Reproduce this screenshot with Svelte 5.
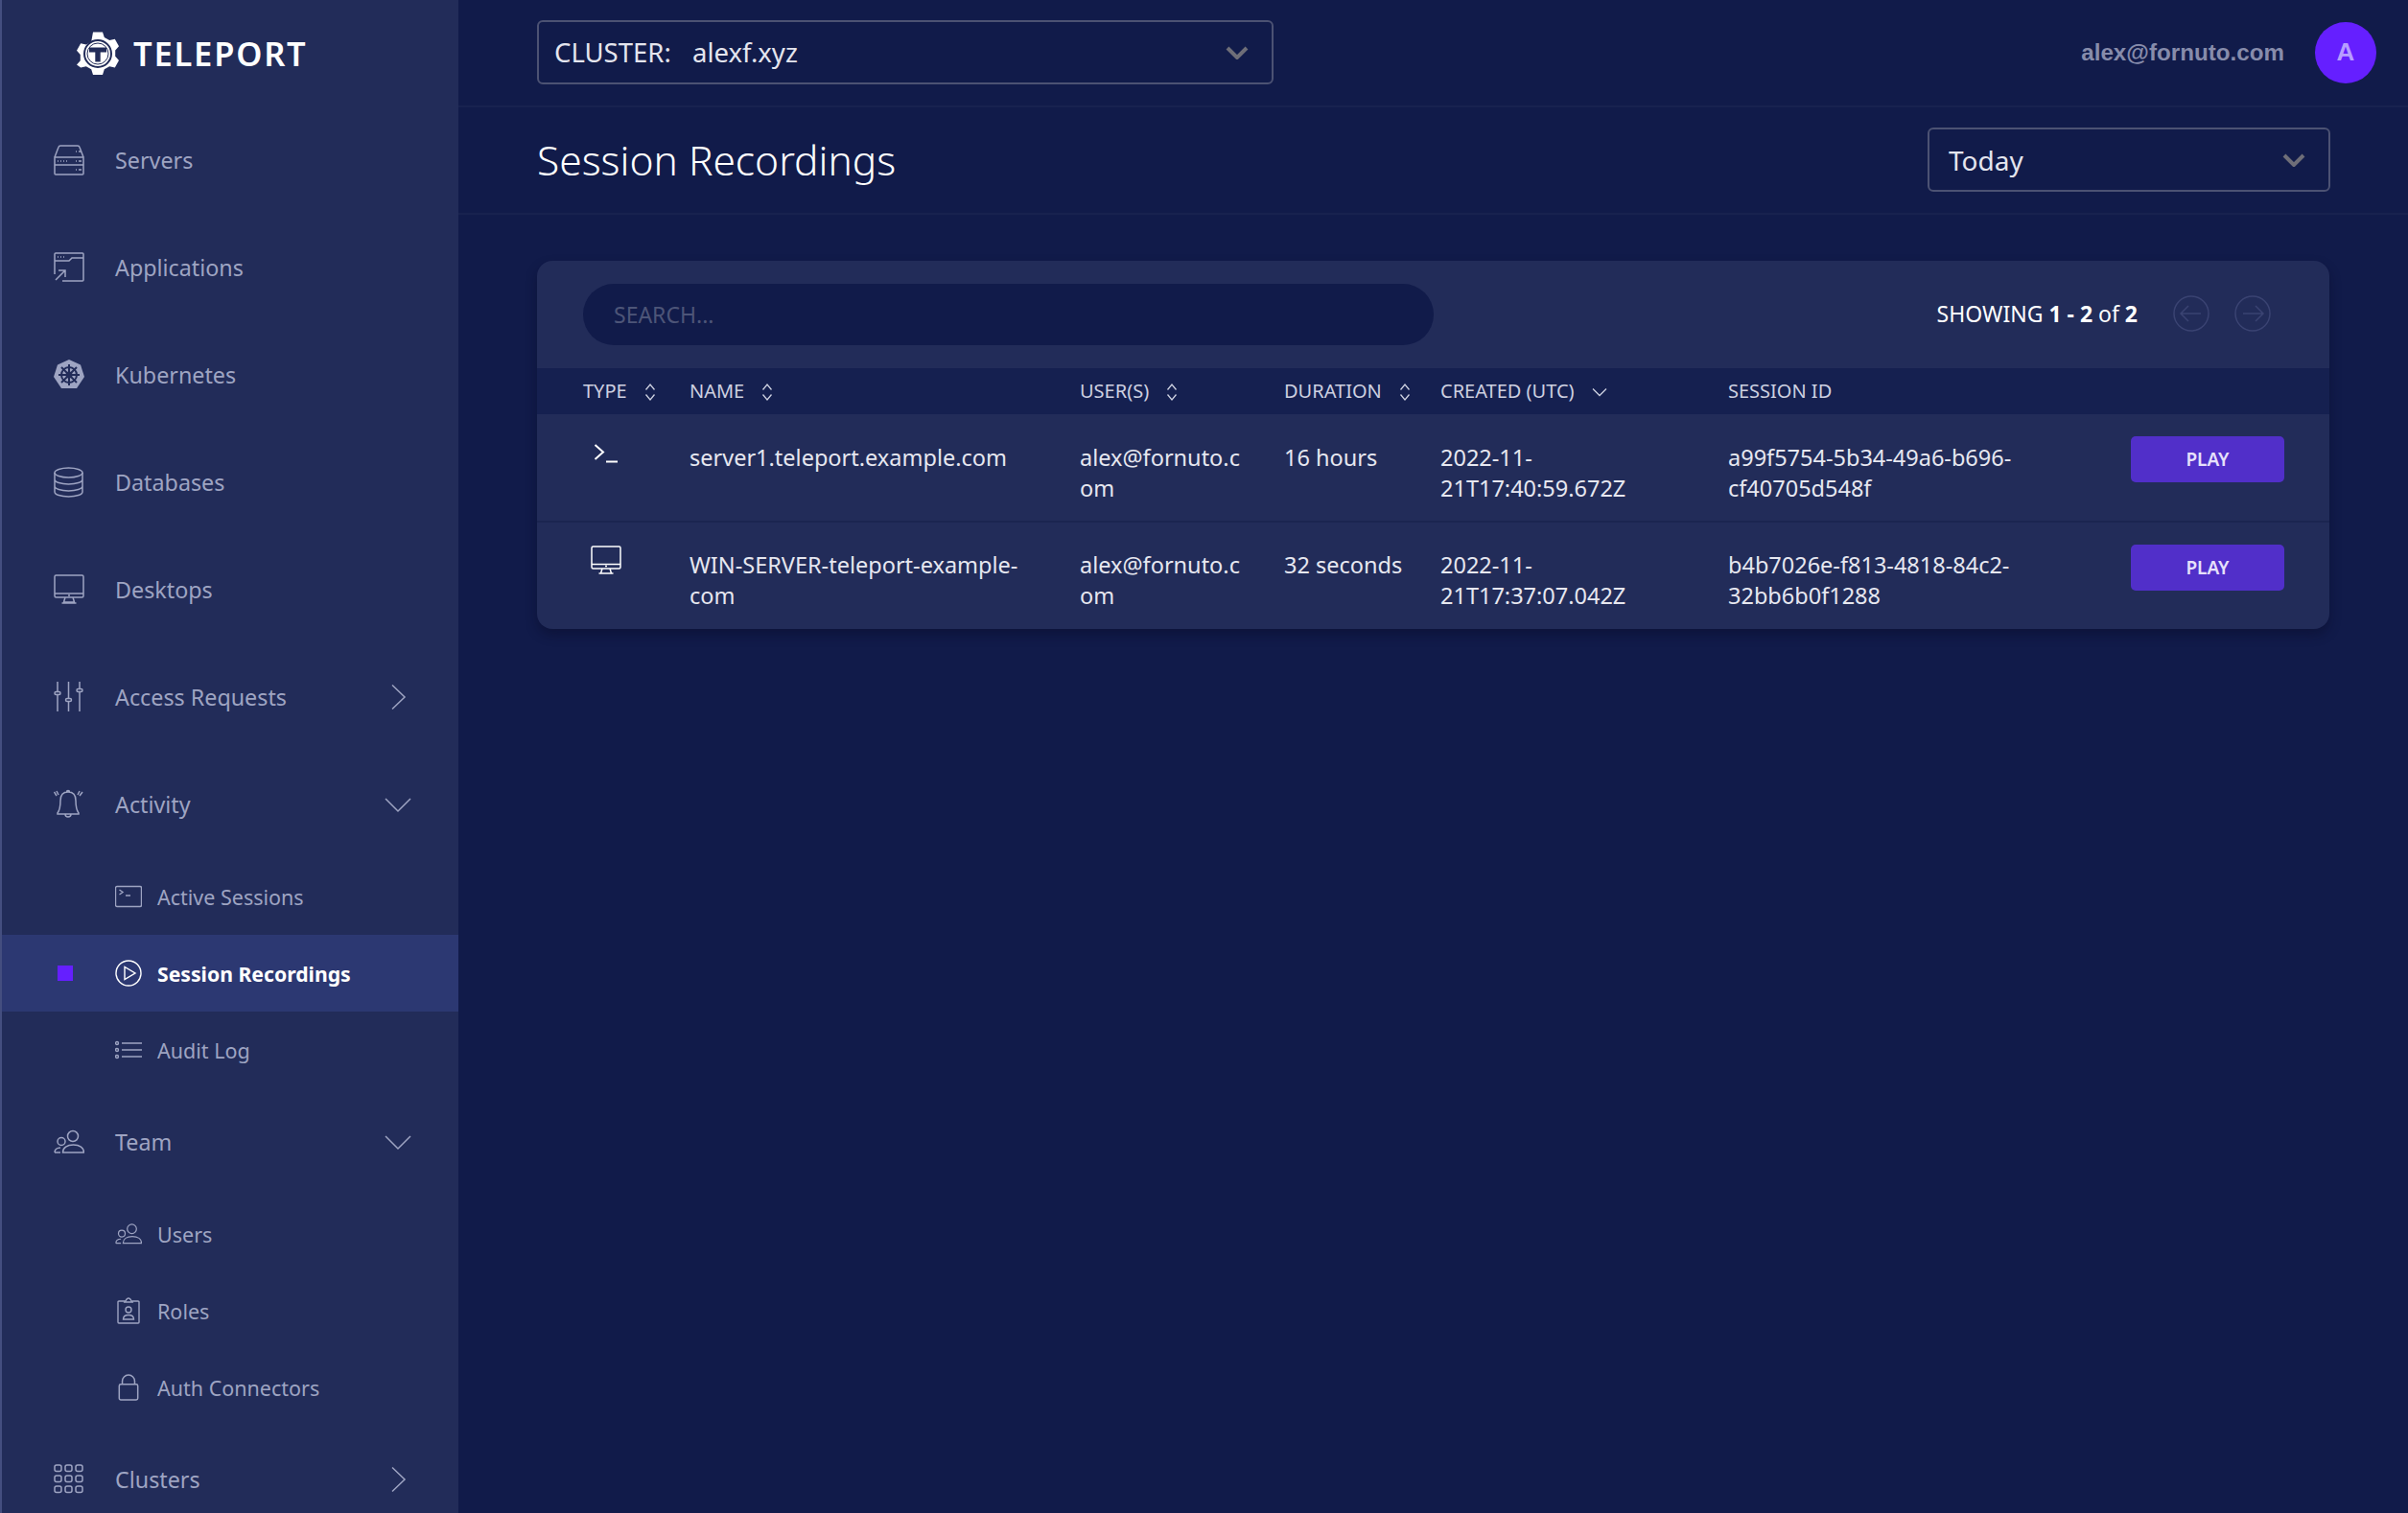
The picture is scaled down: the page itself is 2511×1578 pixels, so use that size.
<script>
  const recordings = [
    { kind: "ssh", name: "server1.teleport.example.com", user: "alex@fornuto.com", duration: "16 hours", created: "2022-11-21T17:40:59.672Z", sid: "a99f5754-5b34-49a6-b696-cf40705d548f" },
    { kind: "desktop", name: "WIN-SERVER-teleport-example-com", user: "alex@fornuto.com", duration: "32 seconds", created: "2022-11-21T17:37:07.042Z", sid: "b4b7026e-f813-4818-84c2-32bb6b0f1288" }
  ]
</script>

{#snippet sortIcon()}
  <svg class="sort" viewBox="0 0 12 20"><path d="M1.500 7.500 6 2l4.500 5.500M1.500 12.500 6 18l4.500-5.500" /></svg>
{/snippet}

{#snippet chevRight()}
  <svg class="chev" viewBox="0 0 28 28"><path d="M8 1.500 21 14 8 26.500" /></svg>
{/snippet}

{#snippet chevDown()}
  <svg class="chev" viewBox="0 0 28 28"><path d="M1 8l13 13L27 8" /></svg>
{/snippet}

{#snippet users()}
  <circle cx="20" cy="6" r="5.500" /><path d="M9.500 23c0-5 4.500-8 11-8s11 3 11 8zM1 23c0-3 2.500-5 6-5M1 23h6" /><circle cx="8" cy="11.500" r="4" />
{/snippet}

<div class="page">
  <aside class="side">
    <div class="brand">
      <svg class="brand-icon" viewBox="0 0 44 48">
        <path fill="#fff" d="M17 1.500h10l1.800 5.500 5.400 3 5.600-1.200 4.200 7.500-3.800 4.200v6.300l3.800 4.200-4.200 7.500-5.600-1.200-5.400 3-1.800 5.700H17l-1.800-5.700-5.400-3-5.600 1.200L0 35.500 3.800 31.300V25L0 20.800l4.200-7.500L9.800 14.500l5.400-3z" />
        <circle cx="22" cy="24" r="14" fill="#fff" stroke="#222c59" stroke-width="2" />
        <circle cx="22" cy="24" r="11" fill="none" stroke="#222c59" stroke-width="1" />
        <path fill="#222c59" d="M13 17.500h18v5h-6.300v10h-5.400v-10H13z" />
      </svg>
      <span>TELEPORT</span>
    </div>

    <nav>
      <div class="item">
        <svg class="ico" viewBox="0 0 32 32"><path d="M1 13 5 2.500Q5.500 1 7 1h18q1.500 0 2 1.500L31 13M1 13h30v8H1zM1 21h30v9q0 1-1 1H2q-1 0-1-1zM23 7h1M26 7h3M23 17h1M26 17h3M23 26h1M26 26h3M4 17h1M7 17h1M10 17h1M13 17h1" /></svg>
        <span>Servers</span>
      </div>
      <div class="item">
        <svg class="ico" viewBox="0 0 32 32"><path d="M1 2q0-1 1-1h28q1 0 1 1v27q0 1-1 1H9M1 23V2M1 9h15l3-3 12 0M4 5h1M7 5h1M10 5h1M2 29l10-10M5 19h7v7" /></svg>
        <span>Applications</span>
      </div>
      <div class="item">
        <svg class="ico" viewBox="0 0 32 32">
          <path class="solid" d="M16 0 28 5.500 32 18 24 30H8L0 18 4 5.500z" />
          <g class="cut"><circle cx="16" cy="16" r="8" /><circle cx="16" cy="16" r="2.500" /><path d="M16 5v22M5 16h22M8 8l16 16M24 8 8 24" /></g>
        </svg>
        <span>Kubernetes</span>
      </div>
      <div class="item">
        <svg class="ico" viewBox="0 0 32 32"><ellipse cx="15.500" cy="6" rx="14.500" ry="5" /><path d="M1 6v20c0 2.800 6.500 5 14.500 5S30 28.800 30 26V6M1 13c0 2.800 6.500 5 14.500 5S30 15.800 30 13M1 20c0 2.800 6.500 5 14.500 5S30 22.800 30 20" /></svg>
        <span>Databases</span>
      </div>
      <div class="item">
        <svg class="ico" viewBox="0 0 32 32"><path d="M2.500 1h27q1.500 0 1.500 1.500v20q0 1.500-1.500 1.500h-27Q1 24 1 22.500v-20Q1 1 2.500 1zM1 20h30M12 24l-1.500 5h11L20 24M8.500 30h15M15 22h2" /></svg>
        <span>Desktops</span>
      </div>
      <div class="item">
        <svg class="ico" viewBox="0 0 32 32"><path d="M4 0v10M4 14v17M15.500 0v17M15.500 21v10M27 0v7M27 11v20" /><rect x="1" y="10.500" width="6" height="3" rx="1.500" /><rect x="12.500" y="17.500" width="6" height="3" rx="1.500" /><rect x="24" y="7.500" width="6" height="3" rx="1.500" /></svg>
        <span>Access Requests</span>
        {@render chevRight()}
      </div>
      <div class="item">
        <svg class="ico" viewBox="0 0 32 32"><path d="M15 3q-8 0-8 9 0 9-3 13v1h22v-1q-3-4-3-13 0-9-8-9zM12 26a3 3 0 0 0 6 0M13.500 3a1.500 1.500 0 0 1 3 0M3 2l2 4M0.500 3 3 7M27 2l-2 4M30 3l-3 4" /></svg>
        <span>Activity</span>
        {@render chevDown()}
      </div>
      <div class="sub">
        <svg class="ico-sm" viewBox="0 0 28 22"><rect x="0.500" y="0.500" width="27" height="21" rx="1.500" /><path d="M4.500 4 8 6.500 4.500 9M11 10h5" /></svg>
        <span>Active Sessions</span>
      </div>
      <div class="sub active">
        <i class="mark"></i>
        <svg class="ico-sm" viewBox="0 0 28 28"><circle cx="14" cy="14" r="13" /><path d="M10 7.500v13l11-6.500z" /></svg>
        <span>Session Recordings</span>
      </div>
      <div class="sub">
        <svg class="ico-sm" viewBox="0 0 28 20"><circle cx="2" cy="3" r="1.500" /><circle cx="2" cy="10" r="1.500" /><circle cx="2" cy="17" r="1.500" /><path d="M7 3h21M7 10h21M7 17h21" /></svg>
        <span>Audit Log</span>
      </div>
      <div class="item">
        <svg class="ico" viewBox="0 0 32 24">{@render users()}</svg>
        <span>Team</span>
        {@render chevDown()}
      </div>
      <div class="sub">
        <svg class="ico-sm" viewBox="0 0 32 24">{@render users()}</svg>
        <span>Users</span>
      </div>
      <div class="sub">
        <svg class="ico-sm" viewBox="0 0 24 28"><path d="M8 4H2q-1 0-1 1v21q0 1 1 1h20q1 0 1-1V5q0-1-1-1h-6M8 5l2.500-3.500q1.500-1 3 0L16 5zM6.500 23c0-3 2.500-4.500 5.500-4.500s5.500 1.500 5.500 4.500z" /><circle cx="12" cy="13" r="3" /></svg>
        <span>Roles</span>
      </div>
      <div class="sub">
        <svg class="ico-sm" viewBox="0 0 20 26"><rect x="1" y="10" width="18" height="15" rx="1.500" /><path d="M4 10V7a6 6 0 0 1 12 0v3" /></svg>
        <span>Auth Connectors</span>
      </div>
      <div class="item">
        <svg class="ico" viewBox="0 0 32 32">
          {#each [1, 12, 23] as y}
            {#each [1, 12, 23] as x}
              <rect {x} {y} width="7" height="6.500" rx="2" />
            {/each}
          {/each}
        </svg>
        <span>Clusters</span>
        {@render chevRight()}
      </div>
    </nav>
  </aside>

  <main>
    <header class="topbar">
      <div class="select cluster">
        <span class="label">CLUSTER:</span>
        <span>alexf.xyz</span>
        <svg class="caret" viewBox="0 0 24 14"><path d="M2 2l10 10L22 2" /></svg>
      </div>
      <div class="account">
        <span class="email">alex@fornuto.com</span>
        <span class="avatar">A</span>
      </div>
    </header>

    <div class="subhead">
      <h1>Session Recordings</h1>
      <div class="select range">
        <span>Today</span>
        <svg class="caret" viewBox="0 0 24 14"><path d="M2 2l10 10L22 2" /></svg>
      </div>
    </div>

    <section class="card">
      <div class="tools">
        <div class="search">SEARCH...</div>
        <div class="pager">
          <span class="count">SHOWING <b>1 - 2</b> of <b>2</b></span>
          <svg class="arrow" viewBox="0 0 38 38"><circle cx="19" cy="19" r="18" /><path d="M29 19H8M16 11l-8 8 8 8" /></svg>
          <svg class="arrow" viewBox="0 0 38 38"><circle cx="19" cy="19" r="18" /><path d="M9 19h21M22 11l8 8-8 8" /></svg>
        </div>
      </div>

      <table>
        <colgroup>
          <col class="c-type" /><col class="c-name" /><col class="c-user" /><col class="c-dur" /><col class="c-created" /><col class="c-sid" /><col />
        </colgroup>
        <thead>
          <tr>
            <th>TYPE {@render sortIcon()}</th>
            <th>NAME {@render sortIcon()}</th>
            <th>USER(S) {@render sortIcon()}</th>
            <th>DURATION {@render sortIcon()}</th>
            <th>CREATED (UTC) <svg class="sort down" viewBox="0 0 16 10"><path d="M1 1.500l7 7 7-7" /></svg></th>
            <th>SESSION ID</th>
            <th></th>
          </tr>
        </thead>
        <tbody>
          {#each recordings as r}
            <tr>
              <td class="type">
                {#if r.kind === "ssh"}
                  <svg class="term" viewBox="0 0 26 20"><path d="M1.500 1 10 8.500 1.500 16M13 18.500h12" /></svg>
                {:else}
                  <svg class="mon" viewBox="0 0 32 30"><path d="M2.500 1h27q1.500 0 1.500 1.500v20q0 1.500-1.500 1.500h-27Q1 24 1 22.500v-20Q1 1 2.500 1zM1 19.500h30M12 24l-1.500 5h11L20 24M8.500 29h15M15 21.500h2" /></svg>
                {/if}
              </td>
              <td>{r.name}</td>
              <td class="brk">{r.user}</td>
              <td>{r.duration}</td>
              <td>{r.created}</td>
              <td>{r.sid}</td>
              <td class="act"><button>PLAY</button></td>
            </tr>
          {/each}
        </tbody>
      </table>
    </section>
  </main>
</div>

<style>
  :global(body) {
    margin: 0;
    background: #111b4a;
  }
  .page {
    display: flex;
    width: 2511px;
    height: 1578px;
    overflow: hidden;
    font-family: "Noto Sans", "Open Sans", sans-serif;
    color: #fff;
  }

  /* sidebar */
  .side {
    width: 478px;
    flex: none;
    box-sizing: border-box;
    background: #222c59;
    border-left: 2px solid #444e7f;
  }
  .brand {
    height: 111px;
    display: flex;
    align-items: center;
    padding-left: 78px;
    gap: 15px;
    font-size: 34.500px;
    font-weight: 600;
    letter-spacing: 1.800px;
  }
  .brand-icon {
    width: 44px;
    height: 48px;
  }
  .item {
    height: 112px;
    display: flex;
    align-items: center;
    padding-left: 54px;
    color: #9ea4c2;
    font-size: 23.300px;
  }
  .item > span {
    margin-left: 32px;
    flex: 1;
  }
  .ico {
    width: 32px;
    height: 32px;
    flex: none;
    fill: none;
    stroke: #9ea4c2;
    stroke-width: 1.5;
  }
  .ico .solid {
    fill: #9ea4c2;
    stroke: none;
  }
  .ico .cut {
    stroke: #222c59;
    stroke-width: 2;
  }
  .chev {
    width: 28px;
    height: 28px;
    margin-right: 49px;
    fill: none;
    stroke: #9ea4c2;
    stroke-width: 1.5;
  }
  .sub {
    position: relative;
    height: 80px;
    display: flex;
    align-items: center;
    padding-left: 118px;
    color: #9ea4c2;
    font-size: 21.500px;
  }
  .sub > span {
    position: absolute;
    left: 162px;
  }
  .ico-sm {
    width: 28px;
    height: 28px;
    fill: none;
    stroke: #9ea4c2;
    stroke-width: 1.400;
  }
  .active {
    background: #2c3872;
    color: #fff;
    font-size: 21.200px;
    font-weight: 700;
  }
  .active .ico-sm {
    stroke: #fff;
  }
  .mark {
    position: absolute;
    left: 58px;
    top: 32px;
    width: 16px;
    height: 16px;
    background: #651fff;
  }

  /* main */
  main {
    flex: 1;
    min-width: 0;
  }
  .topbar {
    height: 112px;
    box-sizing: border-box;
    display: flex;
    align-items: center;
    justify-content: space-between;
    padding: 0 33px 1px 82px;
    border-bottom: 2px solid #18224f;
  }
  .select {
    height: 67px;
    box-sizing: border-box;
    display: flex;
    align-items: center;
    border: 2px solid #4c5273;
    border-radius: 6px;
    color: #e4e5ee;
    font-size: 27.500px;
  }
  .caret {
    width: 24px;
    height: 14px;
    margin-left: auto;
    fill: none;
    stroke: #6e6e78;
    stroke-width: 4;
  }
  .cluster {
    width: 768px;
    padding: 0 24px 0 16px;
  }
  .label {
    width: 144px;
  }
  .account {
    display: flex;
    align-items: center;
    gap: 32px;
  }
  .email {
    font-family: "Liberation Sans", Arial, sans-serif;
    font-weight: 700;
    font-size: 24.200px;
    color: #878cab;
  }
  .avatar {
    width: 64px;
    height: 64px;
    border-radius: 50%;
    background: #651fff;
    color: #b79dff;
    display: flex;
    align-items: center;
    justify-content: center;
    font-family: "Liberation Sans", Arial, sans-serif;
    font-weight: 700;
    font-size: 26px;
  }
  .subhead {
    height: 112px;
    box-sizing: border-box;
    display: flex;
    align-items: center;
    justify-content: space-between;
    padding: 0 81px 1px 82px;
    border-bottom: 2px solid #18224f;
  }
  h1 {
    margin: 0;
    font-size: 42.500px;
    font-weight: 300;
  }
  .range {
    width: 420px;
    padding: 0 24px 0 20px;
    font-size: 28px;
  }

  /* table card */
  .card {
    margin: 48px 82px 0;
    background: #222c59;
    border-radius: 16px;
    overflow: hidden;
    box-shadow: 0 6px 12px rgba(8, 12, 40, 0.45);
  }
  .tools {
    height: 112px;
    box-sizing: border-box;
    display: flex;
    align-items: center;
    justify-content: space-between;
    padding: 0 61px 0 48px;
  }
  .search {
    width: 855px;
    height: 64px;
    padding-left: 32px;
    display: flex;
    align-items: center;
    border-radius: 32px;
    background: #111b4a;
    color: #4d5578;
    font-size: 23px;
    line-height: 62px;
  }
  .pager {
    display: flex;
    align-items: center;
    margin-bottom: 2px;
  }
  .count {
    font-size: 23px;
    margin-right: 37px;
  }
  .count b {
    font-weight: 700;
  }
  .arrow {
    width: 38px;
    height: 38px;
    margin-left: 26px;
    fill: none;
    stroke: #3a4372;
    stroke-width: 1.500;
  }
  .arrow:first-of-type {
    margin-left: 0;
  }
  table {
    width: 100%;
    table-layout: fixed;
    border-collapse: collapse;
  }
  .c-type { width: 143px; }
  .c-name { width: 407px; }
  .c-user { width: 213px; }
  .c-dur { width: 163px; }
  .c-created { width: 300px; }
  .c-sid { width: 420px; }
  th {
    height: 46px;
    padding: 0 16px 2px;
    background: #152050;
    color: #cdd0e0;
    font-size: 20px;
    font-weight: 400;
    text-align: left;
    white-space: nowrap;
  }
  th:first-child,
  td:first-child {
    padding-left: 48px;
  }
  .sort {
    width: 12px;
    height: 20px;
    margin-left: 13px;
    vertical-align: -4px;
    fill: none;
    stroke: #cdd0e0;
    stroke-width: 1.300;
  }
  .sort.down {
    width: 16px;
    height: 10px;
    vertical-align: 1px;
  }
  td {
    height: 112px;
    box-sizing: border-box;
    padding: 29px 16px 0;
    vertical-align: top;
    color: #e6e7f0;
    font-size: 23.500px;
    line-height: 32px;
  }
  tbody tr + tr td {
    height: 112px;
    padding-top: 28px;
    border-top: 2px solid #1b2550;
  }
  .brk {
    word-break: break-all;
  }
  tbody tr td.type {
    padding-top: 13px;
  }
  .type svg {
    display: block;
    fill: none;
    stroke: #fff;
  }
  .term {
    width: 26px;
    height: 20px;
    margin: 18px 0 0 11px;
    stroke-width: 2;
  }
  .mon {
    width: 32px;
    height: 30px;
    margin: 11px 0 0 8px;
    stroke-width: 1.500;
  }
  tbody tr td.act {
    padding-top: 23px;
  }
  button {
    width: 160px;
    height: 48px;
    border: none;
    border-radius: 5px;
    background: #512fc9;
    color: #e6e0fb;
    font-family: inherit;
    font-size: 19px;
    font-weight: 600;
  }
</style>
